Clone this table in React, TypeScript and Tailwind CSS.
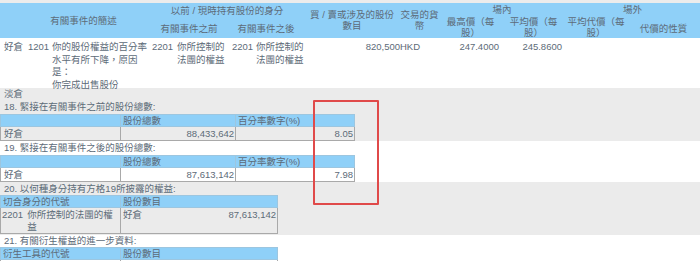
import React from 'react';

const font = { fontFamily: '"Liberation Sans", "Noto Sans CJK TC", sans-serif' };

const cols = 'grid-cols-[27px_23px_100px_26px_52px_27px_49px_96px_39px_63px_63px_62px_73px]';

const Label: React.FC<{ children: React.ReactNode; className?: string }> = ({ children, className = '' }) => (
    <div className={`h-[13px] pl-[4px] leading-[13px] ${className}`}>{children}</div>
);

const HoldingTable: React.FC<{ shares: string; pct: string }> = ({ shares, pct }) => (
    <table className="w-[354px] border-collapse table-fixed">
        <colgroup>
            <col className="w-[120px]" />
            <col className="w-[115px]" />
            <col className="w-[119px]" />
        </colgroup>
        <tbody>
            <tr className="h-[12px] bg-[#8fd0f8]">
                <td className="border border-[#9cc6e0] p-0" />
                <td className="border border-[#9cc6e0] p-0 pl-[2px] leading-[11px]">股份總數</td>
                <td className="border border-[#9cc6e0] p-0 pl-[2px] leading-[11px]">百分率數字(%)</td>
            </tr>
            <tr className="h-[14px]">
                <td className="border border-[#a9a9a9] p-0 pl-[3px] leading-[13px]">好倉</td>
                <td className="border border-[#a9a9a9] p-0 pr-[1px] text-right leading-[13px]">{shares}</td>
                <td className="border border-[#a9a9a9] p-0 pr-[1px] text-right leading-[13px]">{pct}</td>
            </tr>
        </tbody>
    </table>
);

const App: React.FC = () => {
    return (
        <div className="relative w-[700px] h-[261px] overflow-hidden bg-white text-[9.5px] text-[#5d6b78]" style={font}>
            <div className="h-[3px] bg-[#ececec]" />

            {/* main header */}
            <div className={`grid ${cols} grid-rows-[17px_18px] bg-[#8fd0f8] leading-[11px]`}>
                <div className="col-start-2 col-span-2 row-span-2 flex items-center justify-center pr-[10px]">有關事件的簡述</div>
                <div className="col-start-4 col-span-4 -mt-[3px] flex items-center justify-center">以前 / 現時持有股份的身分</div>
                <div className="col-start-8 row-span-2 -mt-[2px] flex items-center justify-center text-center px-[6px]">買 / 賣或涉及的股份數目</div>
                <div className="col-start-9 row-span-2 -mt-[2px] flex items-center justify-center text-center">交易的貨幣</div>
                <div className="col-start-10 col-span-2 -mt-[4px] flex items-center justify-center">場內</div>
                <div className="col-start-12 col-span-2 -mt-[4px] flex items-center justify-center">場外</div>
                <div className="col-start-4 col-span-2 row-start-2 -mt-[1px] flex items-center justify-center">有關事件之前</div>
                <div className="col-start-6 col-span-2 row-start-2 -mt-[1px] flex items-center justify-center">有關事件之後</div>
                <div className="col-start-10 row-start-2 -mt-[5px] flex items-center justify-center text-center px-[6px]">最高價（每股）</div>
                <div className="col-start-11 row-start-2 -mt-[5px] flex items-center justify-center text-center px-[6px]">平均價（每股）</div>
                <div className="col-start-12 row-start-2 -mt-[5px] flex items-center justify-center text-center px-[1px]">平均代價（每股）</div>
                <div className="col-start-13 row-start-2 -mt-[1px] flex items-center justify-center">代價的性質</div>
            </div>

            {/* first data row */}
            <div className={`grid h-[50px] ${cols} pt-[3px] leading-[12.5px]`}>
                <div className="pl-[4px]">好倉</div>
                <div className="pl-[1px]">1201</div>
                <div className="pl-[2px]">你的股份權益的百分率水平有所下降，原因是：<br />你完成出售股份</div>
                <div className="pl-[2px]">2201</div>
                <div className="pl-[1px]">你所控制的法團的權益</div>
                <div className="pl-[4px]">2201</div>
                <div className="pl-[1px]">你所控制的法團的權益</div>
                <div className="text-right">820,500</div>
                <div>HKD</div>
                <div className="text-right pr-[3px]">247.4000</div>
                <div className="text-right pr-[3px]">245.8600</div>
                <div />
                <div />
            </div>

            {/* 淡倉 + 18 */}
            <div className="bg-[#ebebeb]">
                <div className="h-[12px] pl-[4px] leading-[12px]">淡倉</div>
                <Label>18. 緊接在有關事件之前的股份總數:</Label>
                <div className="pt-[1px]">
                    <HoldingTable shares="88,433,642" pct="8.05" />
                </div>
            </div>

            {/* 19 */}
            <div className="bg-white">
                <Label className="!h-[14px] !leading-[14px]">19. 緊接在有關事件之後的股份總數:</Label>
                <HoldingTable shares="87,613,142" pct="7.98" />
            </div>

            {/* 20 */}
            <div className="bg-[#ebebeb] pb-[1px]">
                <Label>20. 以何種身分持有方格19所披露的權益:</Label>
                <table className="w-[277px] border-collapse table-fixed">
                    <colgroup>
                        <col className="w-[120px]" />
                        <col className="w-[157px]" />
                    </colgroup>
                    <tbody>
                        <tr className="h-[12px] bg-[#8fd0f8]">
                            <td className="border border-[#9cc6e0] p-0 pl-[2px] leading-[11px]">切合身分的代號</td>
                            <td className="border border-[#9cc6e0] p-0 pl-[2px] leading-[11px]">股份數目</td>
                        </tr>
                        <tr className="h-[26px]">
                            <td className="border border-[#a9a9a9] p-0 pt-[1px] align-top leading-[12px]">
                                <div className="flex">
                                    <span className="pl-[1px] pr-[4px]">2201</span>
                                    <span className="flex-1">你所控制的法團的權益</span>
                                </div>
                            </td>
                            <td className="border border-[#a9a9a9] p-0 pt-[1px] align-top leading-[12px]">
                                <div className="flex justify-between pl-[2px] pr-[1px]">
                                    <span>好倉</span>
                                    <span>87,613,142</span>
                                </div>
                            </td>
                        </tr>
                    </tbody>
                </table>
            </div>

            {/* 21 */}
            <div className="bg-white">
                <Label className="!h-[12px] !leading-[12px]">21. 有關衍生權益的進一步資料:</Label>
                <table className="w-[277px] border-collapse table-fixed">
                    <colgroup>
                        <col className="w-[120px]" />
                        <col className="w-[157px]" />
                    </colgroup>
                    <tbody>
                        <tr className="h-[12px] bg-[#8fd0f8]">
                            <td className="border border-[#9cc6e0] p-0 pl-[2px] leading-[11px]">衍生工具的代號</td>
                            <td className="border border-[#9cc6e0] p-0 pl-[2px] leading-[11px]">股份數目</td>
                        </tr>
                        <tr className="h-[14px]">
                            <td className="border border-[#a9a9a9] p-0" />
                            <td className="border border-[#a9a9a9] p-0" />
                        </tr>
                    </tbody>
                </table>
            </div>

            {/* red highlight box */}
            <div className="absolute left-[313px] top-[100px] w-[66px] h-[105px] border-2 border-[#e04a4a] rounded-[1px]" />
        </div>
    );
};

export default App;
